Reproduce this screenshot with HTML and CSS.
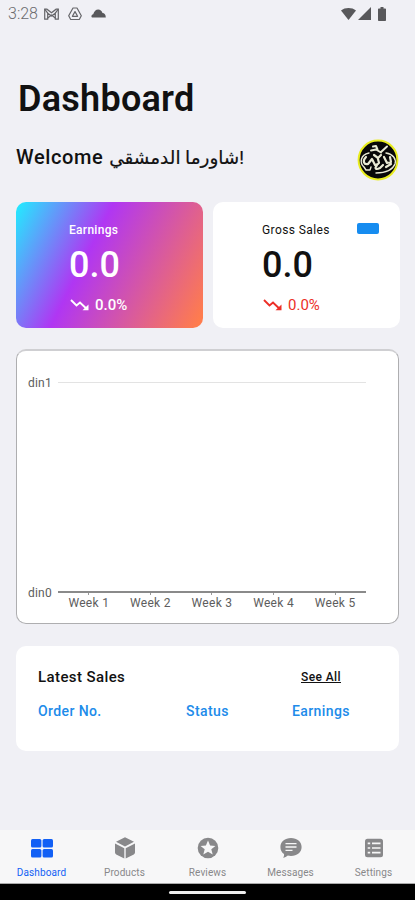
FILE: index.html
```html
<!DOCTYPE html>
<html lang="en">
<head>
<meta charset="utf-8">
<title>Dashboard</title>
<link rel="stylesheet" href="styles.css">
</head>
<body>
<header class="status">
  <span class="time">3:28</span>
  <svg class="s-mail" width="15" height="12" viewBox="0 0 15 12" fill="none" stroke="#66666a" stroke-width="1.2"><path d="M.7 11.2V1.2h2.2l4.6 3.6 4.6-3.6h2.2v10h-3V5.2L7.500 8 3.700 5.200v6z"/><path d="M.7 1.200l3 4M14.300 1.200l-3 4M3.700 10l3.800-3 3.800 3"/></svg>
  <svg class="s-drive" width="14" height="14" viewBox="0 0 14 14" fill="none" stroke="#66666a" stroke-width="1.2" stroke-linejoin="round"><path d="M5 1h4l4.300 7.800-2 3.700H2.700l-2-3.700z"/><path d="M7 4.600l2.600 4.700H4.400z"/></svg>
  <svg class="s-cloud" width="15" height="9" viewBox="0 0 15 9" fill="#58585b"><path d="M1.500 8.500C0 8.500 0 5.700 2.200 5.200 3.200 2.500 4.800.5 7.200.5c2 0 3.600 1.400 4.300 3.500 2 .2 3.200 1.500 3.300 4.500z"/></svg>
  <span class="spacer"></span>
  <svg width="15" height="12" viewBox="0 0 15 12" fill="#58585b"><path d="M0 2.500C4-.8 11-.8 15 2.500L7.500 12z"/></svg>
  <svg class="s-cell" width="13" height="13" viewBox="0 0 13 13" fill="#58585b"><path d="M0 13L13 0v13z"/></svg>
  <svg class="s-batt" width="8" height="14" viewBox="0 0 8 14" fill="#58585b"><path d="M2.500 0h3v1.500H7.200q.8 0 .8.800v10.900q0 .8-.8.800H.8q-.8 0-.8-.8V2.300q0-.8.800-.8h1.700z"/></svg>
</header>
<main>
  <h1>Dashboard</h1>
  <div class="welcome">
    <p><span class="hello">Welcome</span> <span class="store">شاورما الدمشقي!</span></p>
    <svg class="avatar" width="42" height="42" viewBox="0 0 42 42">
      <circle cx="21" cy="21" r="19.400" fill="#080808" stroke="#e9ed20" stroke-width="2"/>
      <g fill="none" stroke="#e9ead4" stroke-linecap="round" stroke-linejoin="round">
        <path stroke-width="2" d="M16 7.500l3-.5 1.500 3.500M14 11.500l5-1 5 3M30 7.500l-6 5.500"/>
        <path stroke-width="1.400" d="M12 14C3 16 2.500 24 7 28l2 3h4l1-3M29 14c7 1 10.500 6 9 11-2.500 6-9 9-19 9"/>
        <path stroke-width="2.200" d="M9 18c-4 4-2 8 2 7l4-5 3 6 3-1M17 16l4 3 3-3M21 20l1 4M20 26c-3 4-1 5 3 3l3-3M27 18l3 6 4-1-1-5M29 28l5-3"/>
      </g>
    </svg>
  </div>
  <section class="cards">
    <article class="card earnings">
      <h2>Earnings</h2>
      <div class="amount">0.0</div>
      <div class="trend"><svg width="19" height="12" viewBox="0 0 19 12" fill="none" stroke="currentColor" stroke-width="1.900"><path d="M1 1l5.500 5.500L10 3.600l6 5.700"/><path fill="currentColor" stroke="none" d="M18.500 5.500v5.800h-6z"/></svg><span>0.0%</span></div>
    </article>
    <article class="card gross">
      <h2>Gross Sales</h2>
      <i class="chip"></i>
      <div class="amount">0.0</div>
      <div class="trend"><svg width="19" height="12" viewBox="0 0 19 12" fill="none" stroke="currentColor" stroke-width="1.900"><path d="M1 1l5.500 5.500L10 3.600l6 5.700"/><path fill="currentColor" stroke="none" d="M18.500 5.500v5.800h-6z"/></svg><span>0.0%</span></div>
    </article>
  </section>
  <section class="chart">
    <span class="ylab">din1</span>
    <div class="plot"></div>
    <span class="ylab low">din0</span>
    <div class="weeks"><span>Week 1</span><span>Week 2</span><span>Week 3</span><span>Week 4</span><span>Week 5</span></div>
  </section>
  <section class="sales">
    <div class="sales-head"><h3>Latest Sales</h3><a>See All</a></div>
    <div class="cols"><span>Order No.</span><span>Status</span><span>Earnings</span></div>
  </section>
</main>
<nav class="tabs">
  <div class="tab active"><svg width="24" height="24" viewBox="0 0 24 24" fill="currentColor"><rect x="1" y="3" width="10.400" height="8.500" rx="1.500"/><rect x="12.600" y="3" width="10.400" height="8.500" rx="1.500"/><rect x="1" y="12.900" width="10.400" height="8.500" rx="1.500"/><rect x="12.600" y="12.900" width="10.400" height="8.500" rx="1.500"/></svg><span>Dashboard</span></div>
  <div class="tab"><svg width="24" height="24" viewBox="0 0 24 24" fill="currentColor"><path d="M12 1.300l9 4.500-9 4.800-9-4.800zM2 7.400l9.300 4.900v10.300L3.200 18.400Q2 17.700 2 16.500zM22 7.400l-9.300 4.900v10.300l8.100-4.200q1.200-.7 1.200-1.900z"/></svg><span>Products</span></div>
  <div class="tab"><svg width="24" height="24" viewBox="0 0 24 24"><circle cx="12" cy="12" r="10.300" fill="currentColor"/><path fill="#f7f7f8" d="M12 4.500l2.100 5.100 5.300.3-4.100 3.400 1.400 5.200L12 15.700l-4.700 2.800 1.400-5.200-4.100-3.400 5.300-.3z"/></svg><span>Reviews</span></div>
  <div class="tab"><svg width="24" height="24" viewBox="0 0 24 24"><path fill="currentColor" d="M12 2c6 0 10.600 3.700 10.600 9S18 20 12 20c-1.200 0-2.200-.1-3.200-.4-1.300 1.300-2.900 2-4.800 2.200.9-1.100 1.300-2.300 1-3.800C2.600 16.400 1.400 14 1.400 11 1.400 5.700 6 2 12 2z"/><path stroke="#f7f7f8" stroke-width="1.300" d="M6.500 7.700h11M6.500 11h11M6.500 14.300h7"/></svg><span>Messages</span></div>
  <div class="tab"><svg width="24" height="24" viewBox="0 0 24 24"><rect x="3" y="2.700" width="18" height="18.600" rx="2.500" fill="currentColor"/><path stroke="#f7f7f8" stroke-width="1.700" d="M5.700 7.300h2.500M10 7.300h8.500M5.700 12h2.500M10 12h8.500M5.700 16.700h2.500M10 16.700h8.500"/></svg><span>Settings</span></div>
</nav>
<footer class="gesture"><i></i></footer>
</body>
</html>
```
FILE: styles.css
```css
* { box-sizing: border-box; }
body {
  margin: 0;
  width: 415px;
  height: 900px;
  display: flex;
  flex-direction: column;
  overflow: hidden;
  background: #f0f0f5;
  color: #111;
  font-family: Roboto, "Noto Sans", "DejaVu Sans", sans-serif;
}
svg { display: block; flex: none; }
h1, h2, h3, p { margin: 0; }
.status { display: flex; align-items: center; height: 27px; padding: 0 29px 0 8px; }
.time { width: 30px; font-size: 16px; color: #6b6b6e; font-weight: 300; white-space: nowrap; }
.s-mail { margin-left: 6px; }
.s-drive { margin-left: 9px; }
.s-cloud { margin-left: 9px; }
.spacer { flex: 1; }
.s-cell { margin-left: 2px; }
.s-batt { margin-left: 7px; }
main { flex: 1; padding: 0 16px; }
h1 { margin: 51px 0 0 2px; font-size: 36px; line-height: 42px; font-weight: 600; letter-spacing: 0.25px; }
.welcome { display: flex; justify-content: space-between; align-items: center; height: 42px; margin-top: 19px; }
.welcome p { font-size: 20px; font-weight: 500; line-height: 28px; white-space: nowrap; margin-top: -5px; }
.hello { letter-spacing: 0.6px; }
.store { margin-left: 1px; font-size: 18.4px; font-weight: 400; -webkit-text-stroke: 0.2px #111; }
.cards { display: grid; grid-template-columns: 187px 187px; gap: 10px; margin-top: 21px; }
.card { position: relative; height: 126px; border-radius: 10px; padding: 20px 0 0 53px; background: #fff; }
.gross { padding-left: 49px; }
.earnings { color: #fff; background: linear-gradient(117deg, #20eeff 0%, #b036f3 39%, #ff7c4d 97%); }
.card h2 { font-size: 12px; line-height: 16px; font-weight: 500; letter-spacing: 0.3px; }
.gross h2 { font-weight: 400; letter-spacing: 0.4px; }
.amount { font-size: 36px; line-height: 44px; font-weight: 500; margin-top: 5px; }
.trend { display: flex; align-items: center; gap: 6px; height: 20px; margin-top: 8px; font-size: 15px; }
.trend svg { margin-left: 1px; }
.earnings .trend { font-weight: 500; }
.gross .trend { color: #ec2f27; }
.chip { position: absolute; top: 21px; right: 21px; width: 22px; height: 11px; border-radius: 2px; background: #168cf0; }
.chart {
  display: grid;
  grid-template-columns: 30px 308px;
  grid-template-rows: 211px 22px;
  height: 275px;
  margin-top: 21px;
  padding: 31px 0 0 11px;
  border: 1px solid #aeaeb0;
  border-top: 2px solid #cfcfd2;
  border-radius: 10px;
  background: #fff;
  font-size: 12px;
  color: #5d5d5d;
}
.ylab { line-height: 14px; margin-top: -6px; letter-spacing: 0.2px; }
.low { margin-top: -7px; }
.plot { border-top: 1px solid #e3e3e3; border-bottom: 2px solid #8a8a8a; }
.weeks { display: grid; grid-template-columns: repeat(5, 1fr); }
.weeks span { display: flex; flex-direction: column; align-items: center; line-height: 16px; letter-spacing: 0.3px; white-space: nowrap; }
.weeks span::before { content: ""; width: 1px; height: 2px; background: #999; }
.sales { height: 105px; margin-top: 22px; padding: 21px 0 0 22px; border-radius: 10px; background: #fff; }
.sales-head, .cols { display: grid; align-items: center; }
.sales-head { grid-template-columns: 263px auto; height: 20px; }
.sales h3 { font-size: 15px; font-weight: 500; letter-spacing: 0.4px; }
.sales a { font-size: 12px; font-weight: 500; text-decoration: underline; letter-spacing: 0.4px; }
.cols { grid-template-columns: 148px 106px auto; height: 20px; margin-top: 14px; color: #208bea; font-size: 14px; font-weight: 500; letter-spacing: 0.4px; }
.tabs { display: grid; grid-template-columns: repeat(5, 1fr); height: 54px; background: #f7f7f8; border-bottom: 1px solid #aaa; }
.tab { display: flex; flex-direction: column; align-items: center; padding-top: 6px; color: #88888a; }
.tab span { font-size: 10px; line-height: 13px; margin-top: 6px; letter-spacing: 0.1px; }
.active { color: #1260f5; }
.gesture { height: 16px; background: #000; display: flex; justify-content: center; padding-top: 7px; }
.gesture i { width: 77px; height: 3px; border-radius: 2px; background: #eee; }
```
